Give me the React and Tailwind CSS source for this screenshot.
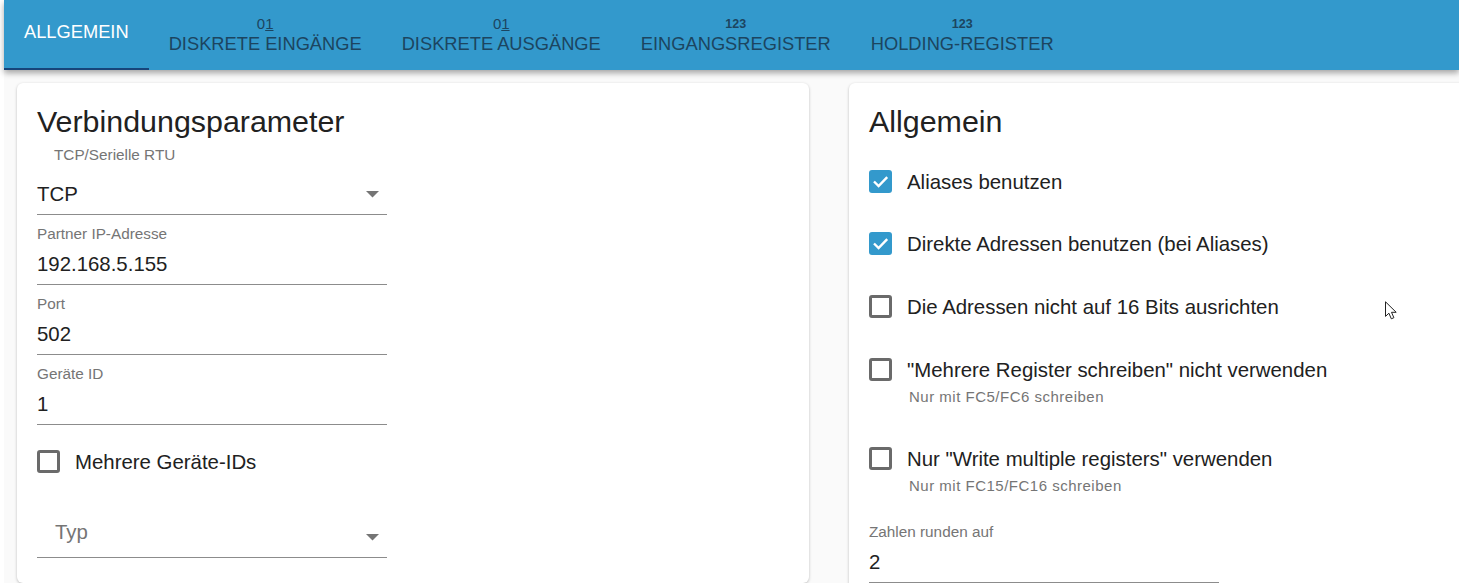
import React from 'react';

const font = "[font-family:'Liberation_Sans',Arial,sans-serif]";

const tabs = [
  { label: 'DISKRETE EINGÄNGE', icon: 'bits' },
  { label: 'DISKRETE AUSGÄNGE', icon: 'bits' },
  { label: 'EINGANGSREGISTER', icon: 'num' },
  { label: 'HOLDING-REGISTER', icon: 'num' },
];

const Chevron = ({ className = '' }) => (
  <svg width="13" height="7" viewBox="0 0 13 7" className={`mr-[8px] shrink-0 ${className}`}>
    <path d="M0 0h13L6.5 6.5z" fill="#757575" />
  </svg>
);

const Check = ({ checked }) =>
  checked ? (
    <span className="flex h-[23px] w-[23px] shrink-0 items-center justify-center rounded-[3px] bg-[#3399cc]">
      <svg width="19" height="19" viewBox="0 0 19 19" fill="none">
        <path d="M3 9.5l4.6 4.6 8.6-9" stroke="white" strokeWidth="2.4" />
      </svg>
    </span>
  ) : (
    <span className="h-[23px] w-[23px] shrink-0 rounded-[3px] border-[3px] border-[#6a6a6a] bg-white" />
  );

const Field = ({ label, value, className = '' }) => (
  <div className={`w-[350px] ${className}`}>
    <div className="h-[19px] text-[15.3px] leading-[19px] text-[#757575]">{label}</div>
    <div className="flex h-[42px] items-center border-b border-[#8c8c8c] pt-[2px] text-[20.4px] text-[#212121]">{value}</div>
  </div>
);

const CheckRow = ({ checked, label, hint, className = '' }) => (
  <div className={`flex items-start gap-[15px] ${className}`}>
    <Check checked={checked} />
    <div>
      <div className="pt-px text-[20.4px] leading-[23px] text-[#212121]">{label}</div>
      {hint && <div className="mt-[7px] ml-[2px] text-[15px] leading-[16px] tracking-[0.5px] text-[#757575]">{hint}</div>}
    </div>
  </div>
);

export default function App() {
  return (
    <div className={`relative h-[583px] overflow-hidden bg-white pl-[4px] ${font}`}>
      {/* Tab bar */}
      <div className="relative z-10 flex h-[70px] bg-[#3399cc] shadow-[0_3px_6px_rgba(0,0,0,0.35)]">
        <div className="flex items-center border-b-2 border-[#17457a] px-5 pb-[5px] text-[18.3px] text-white">ALLGEMEIN</div>
        {tabs.map((tab) => (
          <div key={tab.label} className="flex flex-col items-center px-5 pt-[15px] text-[#1c4560]">
            {tab.icon === 'bits' ? (
              <span className="h-[18px] text-[15px] leading-[18px]">
                0<span className="underline">1</span>
              </span>
            ) : (
              <span className="h-[18px] text-[12.5px] font-bold leading-[18px]">123</span>
            )}
            <span className="text-[18.3px] leading-[22px]">{tab.label}</span>
          </div>
        ))}
      </div>

      {/* Panels */}
      <div className="flex gap-[40px] bg-[#fafafa] pl-[13px] pt-[13px]">
        <div className="h-[500px] w-[792px] shrink-0 rounded-[6px] bg-white pl-[20px] pt-[19px] shadow-[0_1px_3px_rgba(0,0,0,0.25)]">
          <h2 className="h-[40px] text-[30.4px] leading-[38px] text-[#212121]">Verbindungsparameter</h2>
          <div className="w-[350px]">
            <div className="h-[19px] pl-[17px] pt-[4px] text-[15.3px] leading-[18px] text-[#757575]">TCP/Serielle RTU</div>
            <div className="flex h-[54px] items-end justify-between border-b border-[#8c8c8c] pb-[7px] text-[20.4px] text-[#212121]">
              <span className="leading-[26px]">TCP</span>
              <Chevron className="mb-[9px]" />
            </div>
          </div>
          <Field className="mt-[9px]" label="Partner IP-Adresse" value="192.168.5.155" />
          <Field className="mt-[9px]" label="Port" value="502" />
          <Field className="mt-[9px]" label="Geräte ID" value="1" />
          <CheckRow className="mt-[25px]" label="Mehrere Geräte-IDs" />
          <div className="mt-[34px] flex h-[50px] w-[350px] items-end justify-between border-b border-[#8c8c8c] pb-[12px]">
            <span className="pl-[18px] text-[20.4px] leading-[26px] text-[#757575]">Typ</span>
            <Chevron className="mb-[4px]" />
          </div>
        </div>

        <div className="h-[520px] w-[660px] shrink-0 rounded-[6px] bg-white pl-[20px] pt-[19px] shadow-[0_1px_3px_rgba(0,0,0,0.25)]">
          <h2 className="h-[40px] text-[30.4px] leading-[38px] text-[#212121]">Allgemein</h2>
          <div>
            <CheckRow className="mt-[28px]" checked label="Aliases benutzen" />
            <CheckRow className="mt-[38px]" checked label="Direkte Adressen benutzen (bei Aliases)" />
            <CheckRow className="mt-[39px]" label="Die Adressen nicht auf 16 Bits ausrichten" />
            <CheckRow className="mt-[39px]" label={'"Mehrere Register schreiben" nicht verwenden'} hint="Nur mit FC5/FC6 schreiben" />
            <CheckRow className="mt-[42px]" label={'Nur "Write multiple registers" verwenden'} hint="Nur mit FC15/FC16 schreiben" />
          </div>
          <Field className="mt-[28px]" label="Zahlen runden auf" value="2" />
        </div>
      </div>

      {/* Mouse pointer */}
      <svg width="13" height="20" viewBox="0 0 13 20" className="absolute left-[1385px] top-[301px] z-20">
        <path d="M.5.8v14.6l3.4-3.2 2.4 5.6 2.6-1.1-2.4-5.4h4.7z" fill="white" stroke="#222222" strokeWidth="1" />
      </svg>
    </div>
  );
}
